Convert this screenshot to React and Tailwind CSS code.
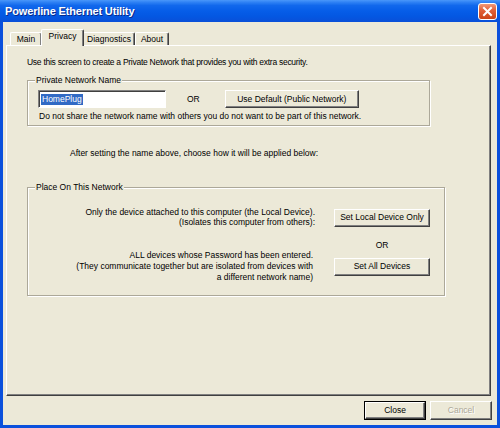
import React from "react";

const btn =
  "flex items-center justify-center bg-[#ECE9D8] border border-t-white border-l-white border-r-[#404040] border-b-[#404040] shadow-[inset_-1px_-1px_0_#808080]";

function Tab({ label, selected, w }) {
  return selected ? (
    <div
      className={`relative z-10 h-[17px] ${w} -mx-[1px] bg-[#ECE9D8] border-t border-l border-white border-r border-r-[#404040] rounded-t-[2px] shadow-[inset_-1px_0_0_#808080] flex items-start justify-center pt-[1px]`}
    >
      {label}
    </div>
  ) : (
    <div
      className={`h-[14px] ${w} bg-[#ECE9D8] border-t border-l border-white border-r border-r-[#404040] rounded-t-[2px] shadow-[inset_-1px_0_0_#808080] flex items-center justify-center`}
    >
      {label}
    </div>
  );
}

function Group({ label, className, children }) {
  return (
    <div
      className={`relative border border-[#aca899] shadow-[inset_1px_1px_0_#fff,1px_1px_0_#fff] ${className}`}
    >
      <span className="absolute -top-[6px] left-[7px] bg-[#ECE9D8] px-[1px] leading-[11px]">
        {label}
      </span>
      {children}
    </div>
  );
}

export default function App() {
  return (
    <div className="w-[500px] h-[428px] bg-[#0b50dc] flex flex-col font-['Liberation_Sans',Arial,sans-serif] text-[8.5px] leading-[11px] text-black overflow-hidden">
      {/* title bar */}
      <div className="h-[22px] shrink-0 flex items-center justify-between pl-[5px] pr-[3px] bg-[linear-gradient(180deg,#4a97fa_0%,#2f82f4_10%,#1168ec_25%,#065de8_50%,#0457e2_75%,#0a4fd8_100%)]">
        <span className="text-white font-bold text-[11px] tracking-[-0.15px] [text-shadow:1px_1px_0_#0a2a8a]">
          Powerline Ethernet Utility
        </span>
        <div className="w-[19px] h-[17px] rounded-[3px] border border-white bg-[linear-gradient(180deg,#f09a7a_0%,#e2623a_40%,#cc4417_100%)] flex items-center justify-center">
          <svg width="11" height="11" viewBox="0 0 11 11">
            <path d="M2 2 L9 9 M9 2 L2 9" stroke="white" strokeWidth="2" strokeLinecap="square" />
          </svg>
        </div>
      </div>

      {/* body */}
      <div className="flex-1 mx-[3px] mb-[3px] bg-[#ECE9D8] flex flex-col">
        {/* tabs */}
        <div className="flex items-end pl-[7px] pt-[7px] -mb-[1px]">
          <Tab label="Main" w="w-[32px]" />
          <Tab label="Privacy" w="w-[43px]" selected />
          <Tab label="Diagnostics" w="w-[52px]" />
          <Tab label="About" w="w-[34px]" />
        </div>

        {/* panel */}
        <div className="ml-[3px] w-[485px] h-[351px] border border-t-white border-l-white border-r-[#404040] border-b-[#404040] shadow-[inset_-1px_-1px_0_#808080] flex flex-col pl-[20px]">
          <div className="mt-[11px] tracking-[-0.27px]">
            Use this screen to create a Private Network that provides you with extra security.
          </div>

          <Group label="Private Network Name" className="mt-[12px] w-[403px] h-[46px]">
            <div className="flex items-center mt-[9px] ml-[10px]">
              <div className="w-[128px] h-[18px] bg-white border border-t-[#808080] border-l-[#808080] border-r-white border-b-white shadow-[inset_1px_1px_0_#404040] flex items-center pl-[2px]">
                <span className="bg-[#316ac5] text-white px-[1px] leading-[11px]">HomePlug</span>
              </div>
              <span className="ml-[21px]">OR</span>
              <div className={`${btn} ml-[25px] w-[134px] h-[18px]`}>
                Use Default (Public Network)
              </div>
            </div>
            <div className="ml-[11px] mt-[3px]">
              Do not share the network name with others you do not want to be part of this network.
            </div>
          </Group>

          <div className="ml-[43px] mt-[22px]">
            After setting the name above, choose how it will be applied below:
          </div>

          <Group label="Place On This Network" className="mt-[28px] w-[418px] h-[109px]">
            <div className="flex items-center mt-[19px]">
              <div className="w-[287px] text-right">
                <div>Only the device attached to this computer (the Local Device).</div>
                <div className="-mt-[1px]">(Isolates this computer from others):</div>
              </div>
              <div className={`${btn} ml-[19px] w-[96px] h-[18px]`}>Set Local Device Only</div>
            </div>
            <div className="ml-[306px] w-[96px] text-center mt-[12px]">OR</div>
            <div className="flex items-center -mt-[1px]">
              <div className="w-[285px] text-right">
                <div>ALL devices whose Password has been entered.</div>
                <div>(They communicate together but are isolated from devices with</div>
                <div>a different network name)</div>
              </div>
              <div className={`${btn} ml-[21px] w-[96px] h-[18px]`}>Set All Devices</div>
            </div>
          </Group>
        </div>

        {/* bottom buttons */}
        <div className="flex justify-end gap-[4px] pr-[5px] mt-[5px]">
          <div className="w-[62px] h-[19px] border border-black">
            <div className={`${btn} w-full h-full`}>Close</div>
          </div>
          <div className={`${btn} w-[62px] h-[19px] text-[#aca899] [text-shadow:1px_1px_0_#fff]`}>
            Cancel
          </div>
        </div>
      </div>
    </div>
  );
}
